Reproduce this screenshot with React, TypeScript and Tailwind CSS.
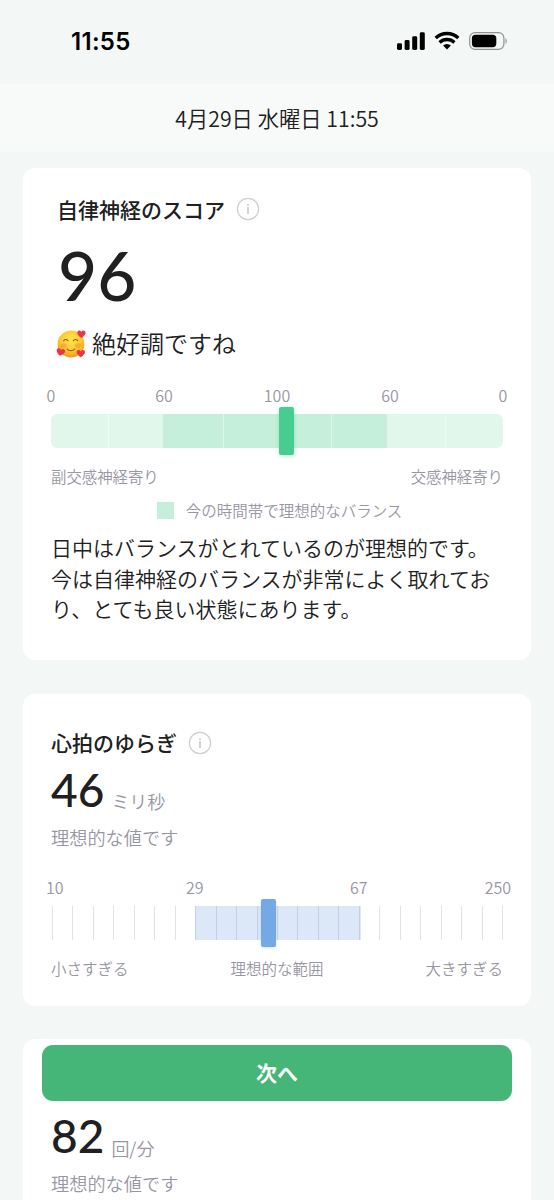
import React from 'react';

interface InfoIconProps {
  className?: string;
}

const TICKS = Array.from({ length: 23 }, (_, i) => i);

function StatusBar() {
  return (
    <div className="flex h-[84px] items-start justify-between pl-[71px] pr-[46px] pt-[25px]">
      <span className="font-['Inter'] text-[24px] font-semibold leading-[34px] tracking-[0.3px] text-black">11:55</span>
      <svg width="112" height="20" viewBox="0 0 112 20" className="mt-[6px]" fill="#000">
        <rect x="1" y="12.2" width="5" height="6.8" rx="1.4" />
        <rect x="8.6" y="9" width="5" height="10" rx="1.4" />
        <rect x="16.2" y="5.2" width="5" height="13.8" rx="1.4" />
        <rect x="23.8" y="1.3" width="5" height="17.7" rx="1.4" />
        <g fill="none" stroke="#000" strokeWidth="3.4">
          <path d="M39.7 7a16.5 16.5 0 0 1 22.6 0" />
          <path d="M43.6 11.4a10.8 10.8 0 0 1 14.8 0" />
        </g>
        <path d="M51 18.6l-3.9-4a5.6 5.6 0 0 1 7.8 0z" />
        <rect x="73.7" y="1.6" width="34.2" height="16.8" rx="5.4" fill="none" stroke="#8f9291" strokeWidth="1.2" />
        <rect x="75.9" y="3.8" width="24.4" height="12.4" rx="3.6" />
        <path d="M109.5 7.2c1.7.6 1.7 5 0 5.6z" fill="#8f9291" />
      </svg>
    </div>
  );
}

function InfoIcon({ className }: InfoIconProps) {
  return (
    <svg width="24" height="24" viewBox="0 0 24 24" fill="none" className={className}>
      <circle cx="12" cy="12" r="10.6" stroke="#cfcfd1" strokeWidth="1.2" />
      <path d="M12 10v7M12 6.9v1.8" stroke="#c8c8ca" strokeWidth="1.6" />
    </svg>
  );
}

function HeartsFace() {
  return (
    <svg width="30" height="30" viewBox="0 0 30 30" fill="none" className="shrink-0">
      <defs>
        <radialGradient id="face" cx="0.5" cy="0.35" r="0.65">
          <stop offset="0" stopColor="#ffe44f" />
          <stop offset="0.6" stopColor="#fdc92f" />
          <stop offset="1" stopColor="#f29a1c" />
        </radialGradient>
        <path id="heart" d="M0 3.9C-4.6 1-4.7-1.6-3.6-2.8-2.4-4-.6-3.5 0-1.9.6-3.5 2.4-4 3.6-2.8 4.7-1.6 4.6 1 0 3.9z" />
      </defs>
      <circle cx="15" cy="15" r="13.4" fill="url(#face)" />
      <ellipse cx="7.8" cy="16.5" rx="3.2" ry="2.3" fill="#f58a3c" opacity="0.5" />
      <ellipse cx="22" cy="16.5" rx="3.2" ry="2.3" fill="#f58a3c" opacity="0.5" />
      <g stroke="#8a4f16" strokeLinecap="round" strokeWidth="1.1">
        <path d="M7.6 11.8c.8-1.8 3.6-1.8 4.4 0M17.4 11.8c.8-1.8 3.6-1.8 4.4 0M11.2 20c2 2.4 5.4 2.4 7.4 0" />
      </g>
      <use href="#heart" x="25.4" y="5" fill="#ee3345" />
      <use href="#heart" x="4.6" y="23" fill="#ee3345" transform="rotate(12 4.6 23)" />
      <use href="#heart" x="24.8" y="24.4" fill="#ee3345" />
    </svg>
  );
}

function ScoreCard() {
  return (
    <section className="h-[492px] rounded-[12px] bg-white px-7">
      <div className="flex h-[81px] items-center pl-[6px]">
        <h2 className="text-[21px] font-medium leading-[30px]">自律神経のスコア</h2>
        <InfoIcon className="ml-[11px]" />
      </div>
      <div className="-mt-[8px] pl-[7px] font-['Lato'] text-[67.5px] font-medium leading-[68px]">96</div>
      <div className="mt-[17px] flex h-[36px] items-center pl-[5px] text-[24px]">
        <HeartsFace />
        <span className="-mt-[2px] ml-[6px]">絶好調ですね</span>
      </div>
      <div className="-mx-5 mt-[22px] flex justify-between text-[16px] leading-[22px] text-[#9896a3]">
        {['0', '60', '100', '60', '0'].map((label, i) => (
          <span key={i} className="w-10 text-center">{label}</span>
        ))}
      </div>
      <div className="relative mt-[8px] flex h-[34px]">
        <div className="w-[57px] rounded-l-[6px] bg-[#e2f7ec]" />
        <div className="w-[55px] border-l border-[#f0fbf5] bg-[#e2f7ec]" />
        <div className="w-[60px] bg-[#c6efdb]" />
        <div className="w-[108px] border-l border-[#dcf6e9] bg-[#c6efdb]" />
        <div className="w-[56px] border-l border-[#dcf6e9] bg-[#c6efdb]" />
        <div className="w-[58px] bg-[#e2f7ec]" />
        <div className="flex-1 rounded-r-[6px] border-l border-[#f0fbf5] bg-[#e2f7ec]" />
        <div className="absolute -top-[7px] left-[228px] h-[48px] w-[15px] rounded-[2px] bg-[#49cc90] shadow-[0_1px_4px_rgba(73,204,144,0.4)]" />
      </div>
      <div className="mt-[17px] flex justify-between text-[15.4px] leading-[22px] text-[#9896a3]">
        <span>副交感神経寄り</span>
        <span>交感神経寄り</span>
      </div>
      <div className="mt-[12px] flex items-center justify-center pl-[5px] text-[15.5px] leading-[22px] text-[#9896a3]">
        <span className="mr-[12px] h-[17px] w-[17px] bg-[#c6efdb]" />
        今の時間帯で理想的なバランス
      </div>
      <p className="-mr-2 mt-[11px] text-[21px] leading-[30.5px]">
        日中はバランスがとれているのが理想的です。<br />
        今は自律神経のバランスが非常によく取れてお<br />
        り、とても良い状態にあります。
      </p>
    </section>
  );
}

function HeartRateVariabilityCard() {
  return (
    <section className="mt-[34px] h-[312px] rounded-[12px] bg-white px-7 pt-[33px]">
      <div className="flex h-[30px] items-center">
        <h2 className="text-[21px] font-medium leading-[30px]">心拍のゆらぎ</h2>
        <InfoIcon className="ml-[11px] mt-[1px]" />
      </div>
      <div className="mt-[8px] flex h-[54px] items-baseline">
        <span className="font-['Lato'] text-[46px] font-medium leading-[50px]">46</span>
        <span className="relative top-[2px] ml-[7px] text-[18px] text-[#9896a3]">ミリ秒</span>
      </div>
      <p className="mt-[5px] text-[18.2px] leading-[26px] text-[#9896a3]">理想的な値です</p>
      <div className="relative mt-[26px] h-[22px] text-[16px] leading-[22px] text-[#9896a3]">
        <span className="absolute -left-[5px]">10</span>
        <span className="absolute left-[135px]">29</span>
        <span className="absolute left-[299px]">67</span>
        <span className="absolute -right-[8px]">250</span>
      </div>
      <div className="relative mt-[8px] flex h-[34px] justify-between pl-[1px]">
        <div className="absolute left-[144px] h-full w-[166px] bg-[#dce8f7]" />
        {TICKS.map(i => (
          <span key={i} className={i >= 7 && i <= 15 ? 'relative w-[1px] bg-[#c3d0e3]' : 'w-[1px] bg-[#e2e2e3]'} />
        ))}
        <div className="absolute -top-[7px] left-[210px] h-[48px] w-[15px] rounded-[2px] bg-[#75a9e5] shadow-[0_1px_3px_rgba(117,169,229,0.3)]" />
      </div>
      <div className="mt-[17px] flex justify-between text-[15.5px] leading-[22px] text-[#9896a3]">
        <span>小さすぎる</span>
        <span>理想的な範囲</span>
        <span>大きすぎる</span>
      </div>
    </section>
  );
}

function HeartRateCard() {
  return (
    <section className="mt-[33px] h-[170px] rounded-t-[12px] bg-white px-[19px] pt-[6px]">
      <button type="button" className="block h-[56px] w-full rounded-[11px] bg-[#45b578] text-[21px] font-bold text-white">
        次へ
      </button>
      <div className="mt-[10px] flex h-[54px] items-baseline pl-[9px]">
        <span className="font-['Lato'] text-[46px] font-medium leading-[50px]">82</span>
        <span className="relative top-[3px] ml-[7px] text-[18px] text-[#9896a3]">回/分</span>
      </div>
      <p className="mt-[5px] pl-[9px] text-[18.2px] leading-[26px] text-[#9896a3]">理想的な値です</p>
    </section>
  );
}

export default function App() {
  return (
    <main className="h-[1200px] w-[554px] overflow-hidden bg-[#f3f7f6] font-['Noto_Sans_CJK_JP','Noto_Sans',sans-serif] font-[350] text-[#202021]">
      <StatusBar />
      <header className="flex h-[68px] items-center justify-center bg-[#f8faf9] text-[21.3px]">
        4月29日 水曜日 11:55
      </header>
      <div className="px-[23px] pt-[16px]">
        <ScoreCard />
        <HeartRateVariabilityCard />
        <HeartRateCard />
      </div>
    </main>
  );
}
